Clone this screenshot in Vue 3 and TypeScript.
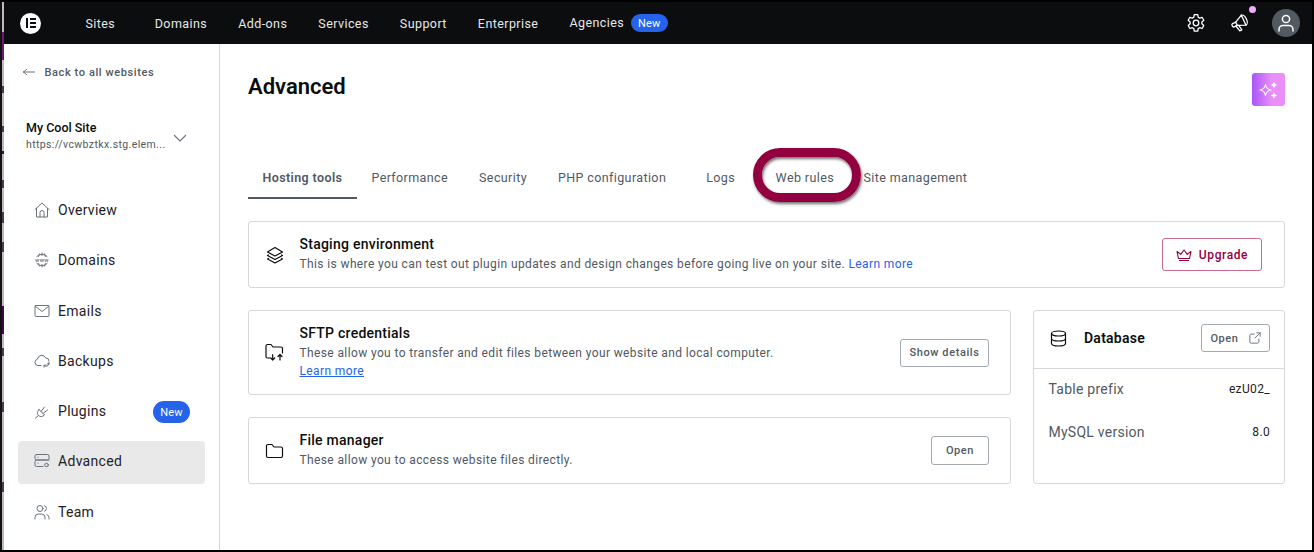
<script setup lang="ts">
const topLinks = ['Sites', 'Domains', 'Add-ons', 'Services', 'Support', 'Enterprise']
const tabs = ['Performance', 'Security', 'PHP configuration', 'Logs', 'Web rules', 'Site management']
const nav = [
  { label: 'Overview', icon: 'home' },
  { label: 'Domains', icon: 'www' },
  { label: 'Emails', icon: 'mail' },
  { label: 'Backups', icon: 'cloud' },
  { label: 'Plugins', icon: 'plug', badge: true },
  { label: 'Advanced', icon: 'server', active: true },
  { label: 'Team', icon: 'team' },
]
</script>

<template>
  <div class="frame">
    <div class="strip"></div>
    <div class="page">
      <header class="topbar">
        <div class="logo"><i class="logo-bar"></i><i class="logo-lines"><b></b><b></b><b></b></i></div>
        <nav class="toplinks">
          <a v-for="l in topLinks" :key="l">{{ l }}</a>
          <a>Agencies <span class="new top-new">New</span></a>
        </nav>
        <div class="top-icons">
          <svg class="gear" width="20" height="20" viewBox="0 0 20 20" fill="none" stroke="#fff" stroke-width="1.3" stroke-linejoin="round">
            <path d="M8.3 1.700h3.400l.5 2.500 1.500.9 2.400-.8 1.700 3-1.900 1.700v1.800l1.900 1.700-1.700 3-2.400-.8-1.500.9-.5 2.500H8.300l-.5-2.500-1.500-.9-2.400.8-1.700-3 1.900-1.700V9.000L2.200 7.300l1.700-3 2.400.8 1.500-.9z" />
            <circle cx="10" cy="10" r="2.800" />
          </svg>
          <div class="mega">
            <svg width="20" height="20" viewBox="0 0 20 20" fill="none" stroke="#fff" stroke-width="1.300" stroke-linejoin="round" stroke-linecap="round">
              <g transform="rotate(-25 10 10)">
                <path d="M3 7.500h3.500l8-4v11l-8-3.500H3a1.200 1.200 0 0 1-1.200-1.200V8.700A1.200 1.200 0 0 1 3 7.500z" />
                <path d="M6.500 7.500V11M5 11l1.500 6h2.300L7.800 11.600M14.500 3.500c1.700 0 3 2.500 3 5.500s-1.300 5.500-3 5.500" />
              </g>
            </svg>
            <i class="dot"></i>
          </div>
          <div class="avatar">
            <svg width="20" height="20" viewBox="0 0 20 20" fill="none" stroke="#fff" stroke-width="1.500" stroke-linecap="round">
              <circle cx="10" cy="6" r="3.600" />
              <path d="M3 18v-1.500c0-2.500 2-4 4-4h6c2 0 4 1.500 4 4V18" />
            </svg>
          </div>
        </div>
      </header>

      <div class="body">
        <aside class="sidebar">
          <a class="back">
            <svg width="14" height="14" viewBox="0 0 14 14" fill="none" stroke="#69727d" stroke-width="1" stroke-linecap="round" stroke-linejoin="round"><path d="M1.500 7h11M1.500 7l3-2.500M1.500 7l3 2.500" /></svg>
            <span>Back to all websites</span>
          </a>
          <div class="site">
            <div class="site-text">
              <div class="site-name">My Cool Site</div>
              <div class="site-url">https://vcwbztkx.stg.elem...</div>
            </div>
            <svg class="chev" width="14" height="8" viewBox="0 0 14 8" fill="none" stroke="#69727d" stroke-width="1.100"><path d="M1 1l6 6 6-6" /></svg>
          </div>
          <ul class="nav">
            <li v-for="n in nav" :key="n.label" :class="{ active: n.active }">
              <svg class="nav-icon" width="16" height="16" viewBox="0 0 16 16" fill="none" stroke="#69727d" stroke-width="1" stroke-linecap="round" stroke-linejoin="round">
                <template v-if="n.icon === 'home'"><path d="M1 7.500 8 1l7 6.500M2.500 6.300V15h11V6.300M6 15v-4.500a2 2 0 0 1 4 0V15" /></template>
                <template v-else-if="n.icon === 'www'">
                  <path d="M2.800 4.500a7 7 0 0 1 10.400 0M2.800 11.500a7 7 0 0 0 10.400 0M8 1v2.500M8 12.500V15M5.500 1.800C5 2.800 4.700 3.600 4.600 4.500M10.500 1.800c.5 1 .8 1.800.9 2.700M5.500 14.200c-.5-1-.8-1.800-.9-2.700M10.500 14.200c.5-1 .8-1.800.9-2.700" />
                  <text x="8" y="10" text-anchor="middle" class="www">www</text>
                </template>
                <template v-else-if="n.icon === 'mail'"><rect x="1" y="2.500" width="14" height="11" rx="1" /><path d="M1.200 3.200 8 8.500l6.800-5.300" /></template>
                <template v-else-if="n.icon === 'cloud'"><path d="M7 12.500H4a3.200 3.200 0 0 1-.6-6.300A4.400 4.400 0 0 1 11.800 5 3 3 0 0 1 15 8M15 10.500a3 3 0 0 1-5 2M10 14v-1.800h1.800M15 9.200V11h-1.800" /></template>
                <template v-else-if="n.icon === 'plug'"><path d="M1.500 15 4.500 12.500M5 6.500 10.500 12C8.500 14 6 14 4.500 12.500S3 8.500 5 6.500zM7 8.500 10.500 4M9 10.500 13.500 7" /></template>
                <template v-else-if="n.icon === 'server'"><rect x="1" y="1.500" width="14" height="5.500" rx="1.500" /><path d="M9 13.500H2.500A1.500 1.500 0 0 1 1 12V8.500A1.500 1.500 0 0 1 2.500 7H15M4 4.300h.1M4 10.300h.1" /><circle cx="12.500" cy="12" r="1.800" /></template>
                <template v-else><circle cx="6" cy="4.500" r="3" /><path d="M1 15v-1.500A3.500 3.500 0 0 1 4.500 10h3a3.500 3.500 0 0 1 3.500 3.500V15M10.500 1.700a3 3 0 0 1 0 5.600M15 15v-1.500a3.500 3.500 0 0 0-2-3" /></template>
              </svg>
              <span class="nav-label">{{ n.label }}</span>
              <span v-if="n.badge" class="new side-new">New</span>
            </li>
          </ul>
        </aside>

        <main class="main">
          <div class="title-row">
            <h1>Advanced</h1>
            <div class="ai">
              <svg width="24" height="24" viewBox="0 0 24 24" fill="none" stroke="#fff" stroke-width="1.200" stroke-linejoin="round">
                <path d="M8.500 6.500c.6 3.600 1.900 4.900 5.500 5.500-3.600.6-4.900 1.900-5.500 5.500-.6-3.600-1.900-4.900-5.500-5.500 3.600-.6 4.900-1.900 5.500-5.500z" />
                <path fill="#fff" d="M17 4.800c.3 1.400.8 1.900 2.200 2.200-1.400.3-1.900.8-2.200 2.200-.3-1.400-.8-1.900-2.200-2.200 1.400-.3 1.900-.8 2.200-2.200zM17 15.300c.3 1.400.8 1.900 2.200 2.200-1.400.3-1.900.8-2.200 2.200-.3-1.400-.8-1.900-2.200-2.200 1.400-.3 1.900-.8 2.200-2.200z" />
              </svg>
            </div>
          </div>

          <div class="tabs">
            <a class="tab selected">Hosting tools</a>
            <a v-for="t in tabs" :key="t" class="tab" :class="'t-' + t.split(' ')[0].toLowerCase()">{{ t }}</a>
            <span class="ring"></span>
          </div>

          <section class="card staging">
            <svg class="card-icon" width="20" height="20" viewBox="0 0 20 20" fill="none" stroke="#0c0d0e" stroke-width="1.200" stroke-linejoin="round" stroke-linecap="round"><path d="M10 2.500 17.500 7 10 11 2.500 7zM3.500 10 2.500 10.500 10 14.500l7.500-4-1-.5M3.500 13.500l-1 .5 7.500 4 7.500-4-1-.5" /></svg>
            <div class="card-text">
              <h3>Staging environment</h3>
              <p>This is where you can test out plugin updates and design changes before going live on your site. <a>Learn more</a></p>
            </div>
            <button class="btn upgrade">
              <svg width="16" height="14" viewBox="0 0 16 14" fill="none" stroke="#93003f" stroke-width="1.100" stroke-linejoin="round"><path d="M2.500 10.500 1 3.500l3.800 2.800L8 2l3.200 4.300L15 3.500l-1.500 7zM3 12.500h10" /></svg>
              Upgrade
            </button>
          </section>

          <div class="columns">
            <div class="left">
              <section class="card sftp">
                <svg class="card-icon" width="20" height="20" viewBox="0 0 20 20" fill="none" stroke="#0c0d0e" stroke-width="1.200" stroke-linejoin="round" stroke-linecap="round"><path d="M5 15H2.500A1.500 1.500 0 0 1 1 13.500V3a1.500 1.500 0 0 1 1.500-1.500H6l2 2.500h8a1.500 1.500 0 0 1 1.500 1.500V10M7.700 11.500V17M5.700 15l2 2 2-2M15 17v-5.500M13 13.500l2-2 2 2" /></svg>
                <div class="card-text">
                  <h3>SFTP credentials</h3>
                  <p>These allow you to transfer and edit files between your website and local computer.</p>
                  <p class="link-line"><a class="under">Learn more</a></p>
                </div>
                <button class="btn plain">Show details</button>
              </section>
              <section class="card files">
                <svg class="card-icon" width="20" height="20" viewBox="0 0 20 20" fill="none" stroke="#0c0d0e" stroke-width="1.200" stroke-linejoin="round"><path d="M3 16.500A1.500 1.500 0 0 1 1.500 15V5A1.500 1.500 0 0 1 3 3.500h4l2 2.500h7A1.500 1.500 0 0 1 17.500 7.500V15a1.500 1.500 0 0 1-1.500 1.500z" /></svg>
                <div class="card-text">
                  <h3>File manager</h3>
                  <p>These allow you to access website files directly.</p>
                </div>
                <button class="btn plain open">Open</button>
              </section>
            </div>

            <aside class="card db">
              <div class="db-head">
                <svg width="20" height="20" viewBox="0 0 20 20" fill="none" stroke="#0c0d0e" stroke-width="1.200"><ellipse cx="10.500" cy="5.500" rx="7" ry="2.500" /><path d="M3.500 5.500v10c0 1.400 3.100 2.500 7 2.500s7-1.100 7-2.500v-10M3.500 10.500c0 1.400 3.100 2.500 7 2.500s7-1.100 7-2.500" /></svg>
                <h3>Database</h3>
                <button class="btn plain db-open">
                  Open
                  <svg width="12" height="12" viewBox="0 0 14 14" fill="none" stroke="#69727d" stroke-width="1.100" stroke-linecap="round"><path d="M6 2.500H2.500A1.500 1.500 0 0 0 1 4v7.500A1.500 1.500 0 0 0 2.500 13H10a1.500 1.500 0 0 0 1.500-1.500V8M7 7l6-6M9 1h4v4" /></svg>
                </button>
              </div>
              <dl>
                <div><dt>Table prefix</dt><dd>ezU02_</dd></div>
                <div><dt>MySQL version</dt><dd>8.0</dd></div>
              </dl>
            </aside>
          </div>
        </main>
      </div>
    </div>
  </div>
</template>

<style>
html, body { margin: 0; background: #000; }
</style>

<style scoped>
* { box-sizing: border-box; }
.frame {
  width: 1314px; height: 552px; overflow: hidden; background: #000;
  padding: 2px 2px 2px 0;
  display: flex;
  font-family: Roboto, "Liberation Sans", sans-serif; color: #0c0d0e;
}
.strip {
  width: 4px; flex: none;
  background:
    linear-gradient(#6a1b72 0 0) 2px 30px / 2px 28px no-repeat,
    linear-gradient(#4a3a50 0 0) 2px 84px / 2px 7px no-repeat,
    linear-gradient(#4a3a50 0 0) 2px 124px / 2px 6px no-repeat,
    linear-gradient(#3d0a45 0 0) 2px 149px / 2px 3px no-repeat,
    linear-gradient(#4a3a50 0 0) 2px 178px / 2px 8px no-repeat,
    linear-gradient(#4a3a50 0 0) 2px 210px / 2px 11px no-repeat,
    linear-gradient(#4a3a50 0 0) 2px 240px / 2px 10px no-repeat,
    linear-gradient(#3d0a45 0 0) 2px 304px / 2px 28px no-repeat,
    linear-gradient(#4a3a50 0 0) 2px 346px / 2px 8px no-repeat,
    linear-gradient(#4a3a50 0 0) 2px 400px / 2px 10px no-repeat,
    linear-gradient(#4a3a50 0 0) 2px 480px / 2px 10px no-repeat,
    linear-gradient(90deg, #141014 0 2px, #bdbabd 2px 4px);
}
.page { flex: 1; min-width: 0; display: flex; flex-direction: column; background: #fff; }
.topbar { height: 42px; flex: none; background: #0c0d0e; display: flex; align-items: center; position: relative; }
.logo { width: 21px; height: 21px; border-radius: 50%; background: #fff; margin-left: 16px; display: flex; align-items: center; justify-content: center; gap: 1.500px; }
.logo-bar { width: 2.500px; height: 10px; background: #0c0d0e; }
.logo-lines { display: flex; flex-direction: column; justify-content: space-between; height: 10px; }
.logo-lines b { display: block; width: 6px; height: 2px; background: #0c0d0e; }
.toplinks { display: flex; align-items: center; margin-left: 44.500px; gap: 31px; font-size: 12.500px; letter-spacing: .42px; color: #e6e8ea; }
.toplinks a:first-child { margin-right: 8.500px; }
.new { display: inline-flex; align-items: center; justify-content: center; background: #2563eb; color: #fff; border-radius: 11px; font-size: 11px; letter-spacing: .2px; }
.top-new { width: 37px; height: 18px; margin-left: 3px; }
.top-icons { position: absolute; right: 12px; top: 0; height: 42px; display: flex; align-items: center; }
.gear { margin-right: 24px; }
.mega { position: relative; width: 20px; height: 20px; margin-right: 22px; }
.dot { position: absolute; width: 7px; height: 7px; border-radius: 50%; background: #f0abfc; right: -5.500px; top: -7px; }
.avatar { width: 28px; height: 28px; border-radius: 50%; background: #515962; display: flex; align-items: center; justify-content: center; }

.body { flex: 1; display: flex; min-height: 0; }
.sidebar { width: 216px; flex: none; border-right: 1px solid #d5d8dc; padding-top: 18px; }
.back { display: flex; align-items: center; gap: 8.500px; padding-left: 18px; font-size: 11px; font-weight: 500; letter-spacing: .6px; color: #515962; height: 20px; }
.site { display: flex; align-items: center; margin-top: 33.500px; padding-left: 22px; height: 42px; }
.site-text { width: 145px; }
.site-name { font-size: 12.500px; font-weight: 500; line-height: 16px; }
.site-url { font-size: 10.500px; letter-spacing: .38px; line-height: 17px; color: #515962; white-space: nowrap; }
.chev { margin: 3px 0 0 2px; }
.nav { list-style: none; margin: 32px 0 0; padding: 0 0 0 14px; }
.nav li { width: 187px; height: 43px; margin-bottom: 7.300px; display: flex; align-items: center; padding: 0 0 2px 16px; border-radius: 4px; font-size: 14px; letter-spacing: .3px; color: #1f2124; }
.nav li.active { background: #e9e9ea; }
.nav-icon { flex: none; margin-right: 8px; }
.www { font-size: 5.800px; font-weight: 500; fill: #69727d; stroke: none; font-family: Roboto, sans-serif; }
.nav-label { flex: 1; }
.side-new { width: 37px; height: 22px; margin: 2px 15px 0 0; }

.main { flex: 1; padding: 0 27px 0 28px; min-width: 0; }
.title-row { height: 82px; display: flex; justify-content: space-between; align-items: flex-start; padding-top: 29px; }
h1 { margin: 0; font-size: 22px; line-height: 28px; font-weight: 600; }
.ai { width: 33px; height: 33px; border-radius: 3px; background: linear-gradient(90deg, #a855f7, #ea8ffa 60%); display: flex; align-items: center; justify-content: center; }
.tabs { position: relative; display: flex; height: 95px; align-items: flex-start; padding-top: 42px; }
.tab { font-size: 12.500px; letter-spacing: .39px; color: #515962; line-height: 20px; margin-right: 31px; white-space: nowrap; }
.tab.selected { font-weight: 600; padding: 0 14.500px; margin-right: 14.500px; border-bottom: 2px solid #515962; height: 31px; }
.t-php { margin-right: 40px; }
.t-logs { margin-right: 40.500px; }
.t-web { margin-right: 29.500px; }
.ring { position: absolute; left: 505px; top: 22px; width: 108px; height: 54px; border: 9px solid #93003f; border-radius: 27px; box-shadow: 1px 2px 3px rgba(0,0,0,.55), inset 1px 2px 3px rgba(0,0,0,.55); pointer-events: none; }
.card { border: 1px solid #d5d8dc; border-radius: 3px; background: #fff; }
.card-icon { flex: none; margin: 0 14.500px 0 16px; }
.card-text { flex: 1; min-width: 0; }
h3 { margin: 0; font-size: 14px; line-height: 16px; font-weight: 500; letter-spacing: .25px; }
.card-text h3 { margin-bottom: 2px; }
.card-text p { margin: 0; font-size: 12px; line-height: 20px; letter-spacing: .38px; color: #515962; }
.card-text p.link-line { line-height: 17px; }
.card-text a { color: #2563eb; }
.under { text-decoration: underline; }
.staging { height: 67px; display: flex; align-items: center; }
.btn { font-family: inherit; background: #fff; border-radius: 3px; display: inline-flex; align-items: center; justify-content: center; font-weight: 500; letter-spacing: .6px; flex: none; padding: 0; }
.upgrade { width: 100px; height: 33px; margin-right: 22px; gap: 7px; border: 1px solid #c96a90; color: #93003f; font-size: 12px; }
.columns { display: flex; gap: 22px; margin-top: 22px; align-items: flex-start; }
.left { width: 763px; flex: none; display: flex; flex-direction: column; gap: 22px; }
.sftp { height: 85px; display: flex; align-items: center; }
.files { height: 67px; display: flex; align-items: center; }
.plain { border: 1px solid #a4aab0; color: #515962; font-size: 11px; }
.sftp .plain { width: 89px; height: 28px; margin-right: 21px; }
.open { width: 58px; height: 29px; margin-right: 21px; }
.db { width: 252px; height: 174px; flex: none; }
.db-head { height: 58px; display: flex; align-items: center; padding: 0 14px 3px 14px; border-bottom: 1px solid #d5d8dc; }
.db-head h3 { flex: 1; margin-left: 16px; font-weight: 600; font-size: 14px; }
.db-open { width: 69px; height: 28px; gap: 10px; }
dl { margin: 0; padding: 9px 14px 0 14.500px; display: flex; flex-direction: column; gap: 21px; }
dl div { display: flex; justify-content: space-between; align-items: center; height: 22px; }
dt { font-size: 14px; letter-spacing: .25px; color: #515962; }
dd { margin: 0; font-size: 12px; letter-spacing: .35px; color: #1f2124; }
</style>
